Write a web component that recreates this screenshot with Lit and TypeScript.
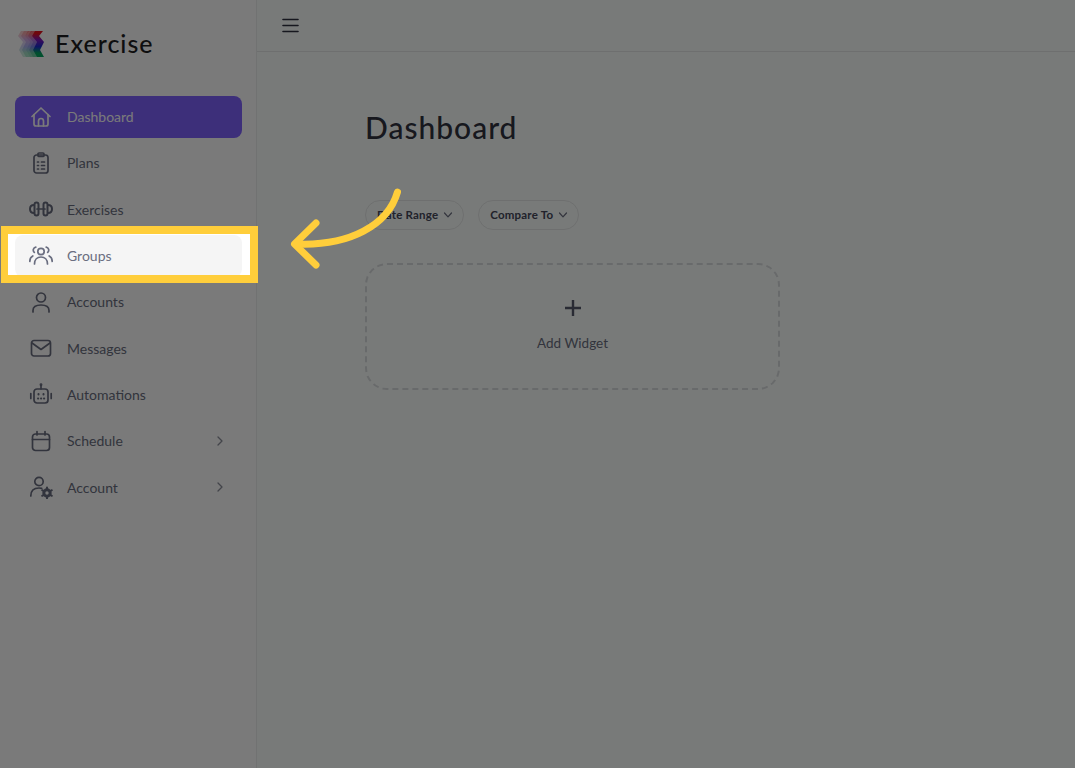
import { LitElement, html, css, svg } from "lit";
import { customElement } from "lit/decorators.js";

const stroke = (body: unknown) => html`<svg class="icon" viewBox="0 0 24 24" fill="none" stroke="currentColor" stroke-width="1.7" stroke-linecap="round" stroke-linejoin="round">${body}</svg>`;

const icons = {
  home: svg`<path d="M3 11.500 12 3l9 8.500"/><path d="M5 9.500V19a2 2 0 0 0 2 2h10a2 2 0 0 0 2-2V9.500"/><path d="M9.500 21v-5a2.500 2.500 0 0 1 5 0v5"/>`,
  plans: svg`<rect x="5" y="4" width="14" height="18" rx="2.500"/><rect x="9" y="2" width="6" height="3.500" rx="1"/><path d="M8.500 11h1M12.500 11h3M8.500 14.500h1M12.500 14.500h3M8.500 18h1M12.500 18h3"/>`,
  dumbbell: svg`<path d="M8 12h8"/><rect x="5.500" y="5.500" width="4" height="13" rx="2" stroke-width="2"/><rect x="14.500" y="5.500" width="4" height="13" rx="2" stroke-width="2"/><path d="M5 8C2.500 8 1 9.800 1 12s1.500 4 4 4M19 8c2.500 0 4 1.800 4 4s-1.500 4-4 4" stroke-width="2"/>`,
  groups: svg`<circle cx="12" cy="8.500" r="3.200"/><path d="M5.500 21c0-4.500 2.800-7 6.500-7s6.500 2.500 6.500 7"/><path d="M6.800 4.200a3 3 0 0 0-1.500 5.200M17.200 4.200a3 3 0 0 1 1.500 5.200M.8 18.500c0-2.500 1-4.500 3-5.500M23.200 18.500c0-2.500-1-4.500-3-5.500"/>`,
  user: svg`<circle cx="12" cy="7.500" r="4.500"/><path d="M4 22v-1.500C4 17 7 15 12 15s8 2 8 5.500V22"/>`,
  mail: svg`<rect x="2.500" y="4.500" width="19" height="15.500" rx="2.500"/><path d="m3 7 9 6.500L21 7"/>`,
  robot: svg`<rect x="5" y="7" width="14" height="14" rx="3"/><path d="M12 3v4M1.800 11.500v5M22.200 11.500v5"/><circle cx="12" cy="2.800" r=".6"/><path d="M9.500 12v.4M14.500 12v.4M9 16.500h.2M12 16.500h.2M15 16.500h.2" stroke-width="2"/>`,
  calendar: svg`<rect x="3.500" y="5" width="17" height="16.500" rx="3"/><path d="M3.500 10.500h17M8 2.500V6M16 2.500V6"/>`,
  account: svg`<circle cx="10" cy="6.500" r="4.200"/><path d="M1.800 21c0-5 3-8 8.200-8 1 0 1.900.1 2.700.4"/><circle cx="18" cy="18" r="3.200" stroke-width="3"/><path d="M18 12.500v1.500M18 22v1.500M13.200 15.200l1.300.8M21.500 20l1.300.8M13.200 20.800l1.300-.8M21.500 16l1.300-.8" stroke-width="2"/>`,
};

const navItems = [
  { label: "Dashboard", icon: icons.home, active: true },
  { label: "Plans", icon: icons.plans },
  { label: "Exercises", icon: icons.dumbbell },
  { label: "Groups", icon: icons.groups, hover: true },
  { label: "Accounts", icon: icons.user },
  { label: "Messages", icon: icons.mail },
  { label: "Automations", icon: icons.robot },
  { label: "Schedule", icon: icons.calendar, more: true },
  { label: "Account", icon: icons.account, more: true },
];

const chevron = html`<svg class="chev" viewBox="0 0 10 10" fill="none" stroke="currentColor" stroke-width="1.2" stroke-linecap="round" stroke-linejoin="round"><path d="M1.500 3 5 6.800 8.500 3"/></svg>`;

const logoBand = "M35 31H43L39 36 44 42 40 50 44 57H37L33 50 37 42 32 36Z";

@customElement("app-root")
export class AppRoot extends LitElement {
  static styles = css`
    :host {
      display: block;
      position: relative;
      width: 1075px;
      height: 768px;
      overflow: hidden;
      font-family: "Lato", "Noto Sans", sans-serif;
      color: #6a6e80;
    }

    .layout {
      display: flex;
      height: 100%;
      background: #fbfffd;
    }

    .sidebar {
      flex: none;
      box-sizing: border-box;
      width: 257px;
      padding: 0 14px 0 15px;
      background: #fff;
      border-right: 1px solid #eceeee;
    }

    .brand {
      display: flex;
      align-items: center;
      gap: 9px;
      height: 96px;
      margin-left: 3px;
      padding-bottom: 10px;
      box-sizing: border-box;
      font-size: 25px;
      font-weight: 500;
      letter-spacing: 1px;
      color: #1e1e22;
    }

    .brand svg {
      width: 28px;
      height: 28px;
      margin-top: 2px;
    }

    nav {
      display: flex;
      flex-direction: column;
      gap: 4.33px;
    }

    .item {
      display: flex;
      align-items: center;
      gap: 14px;
      box-sizing: border-box;
      height: 42px;
      padding: 0 17px 1px 14px;
      border-radius: 8px;
      font-size: 14px;
    }

    .item.active {
      background: #7f62ff;
      color: #fff;
    }

    .item.hover {
      background: #f5f5f5;
    }

    .icon {
      width: 24px;
      height: 24px;
      flex: none;
    }

    .more {
      width: 10px;
      height: 10px;
      margin-left: auto;
      color: #8d909c;
    }

    main {
      flex: 1;
      min-width: 0;
    }

    .topbar {
      display: flex;
      align-items: center;
      height: 51px;
      padding-left: 25px;
      border-bottom: 1px solid #e6e9e8;
      color: #2f3040;
    }

    .topbar svg {
      width: 17px;
      height: 17px;
    }

    .content {
      padding: 56px 0 0 108px;
    }

    h1 {
      margin: 0 0 54px;
      font-size: 30px;
      line-height: 38px;
      font-weight: 500;
      letter-spacing: 1px;
      color: #30323f;
    }

    .filters {
      display: flex;
      gap: 14px;
      margin-bottom: 33px;
    }

    .pill {
      display: flex;
      align-items: center;
      gap: 5px;
      box-sizing: border-box;
      height: 30px;
      padding: 0 10px 1px 11px;
      border: 1px solid #e7e9e9;
      border-radius: 15px;
      font-size: 11.500px;
      font-weight: 700;
      letter-spacing: 0.2px;
      color: #45475a;
    }

    .chev {
      width: 10px;
      height: 10px;
      color: #6a6e80;
    }

    .widget {
      display: flex;
      flex-direction: column;
      align-items: center;
      justify-content: center;
      gap: 15px;
      box-sizing: border-box;
      width: 415px;
      height: 127px;
      padding-bottom: 7px;
      border: 2px dashed #dadddf;
      border-radius: 22px;
      font-size: 13.500px;
    }

    .widget svg {
      width: 24px;
      height: 24px;
      color: #575a6e;
    }

    /* spotlight: dims everything outside the box */
    .spot {
      position: absolute;
      left: 1px;
      top: 226px;
      box-sizing: border-box;
      width: 257px;
      height: 57px;
      border: solid #ffce3b;
      border-width: 8px 8px 8px 7px;
      box-shadow: 0 0 0 1200px rgba(0, 0, 0, 0.52);
    }

    .arrow {
      position: absolute;
      left: 0;
      top: 0;
      width: 1075px;
      height: 768px;
      pointer-events: none;
    }
  `;

  render() {
    return html`
      <div class="layout">
        <aside class="sidebar">
          <div class="brand">
            <svg viewBox="18 30 28 28">
              <defs>
                <linearGradient id="band" x1="0" y1="0" x2="0" y2="1">
                  <stop offset="0.1" stop-color="#e8101c" />
                  <stop offset="0.35" stop-color="#7a18c0" />
                  <stop offset="0.6" stop-color="#1a2cd0" />
                  <stop offset="0.85" stop-color="#04a860" />
                </linearGradient>
              </defs>
              <path d=${logoBand} transform="translate(-14 0)" fill="url(#band)" opacity=".2" />
              <path d=${logoBand} transform="translate(-11 0)" fill="url(#band)" opacity=".2" />
              <path d=${logoBand} transform="translate(-7 0)" fill="url(#band)" opacity=".3" />
              <path d=${logoBand} transform="translate(-4 0)" fill="url(#band)" opacity=".4" />
              <path d=${logoBand} fill="url(#band)" />
            </svg>
            Exercise
          </div>
          <nav>
            ${navItems.map(
              (n) => html`<div class="item ${n.active ? "active" : ""} ${n.hover ? "hover" : ""}">
                ${stroke(n.icon)}<span>${n.label}</span>
                ${n.more
                  ? html`<svg class="more" viewBox="0 0 10 10" fill="none" stroke="currentColor" stroke-width="1.300" stroke-linecap="round" stroke-linejoin="round"><path d="M3 1l4 4-4 4"/></svg>`
                  : ""}
              </div>`
            )}
          </nav>
        </aside>
        <main>
          <div class="topbar">
            <svg viewBox="0 0 17 17" fill="none" stroke="currentColor" stroke-width="1.600" stroke-linecap="round"><path d="M1 2.500h15M1 8.500h15M1 14.500h15"/></svg>
          </div>
          <div class="content">
            <h1>Dashboard</h1>
            <div class="filters">
              <div class="pill">Date Range ${chevron}</div>
              <div class="pill">Compare To ${chevron}</div>
            </div>
            <div class="widget">
              <svg viewBox="0 0 24 24" fill="none" stroke="currentColor" stroke-width="2.400"><path d="M12 4v16M4 12h16"/></svg>
              <span>Add Widget</span>
            </div>
          </div>
        </main>
      </div>
      <div class="spot"></div>
      <svg class="arrow" viewBox="0 0 1075 768" fill="none" stroke="#ffce3b" stroke-width="7" stroke-linecap="round" stroke-linejoin="round">
        <path d="M397.500 192C388 225 350 246 297 244"/>
        <path d="M316 223 294.500 244 316 265"/>
      </svg>
    `;
  }
}
